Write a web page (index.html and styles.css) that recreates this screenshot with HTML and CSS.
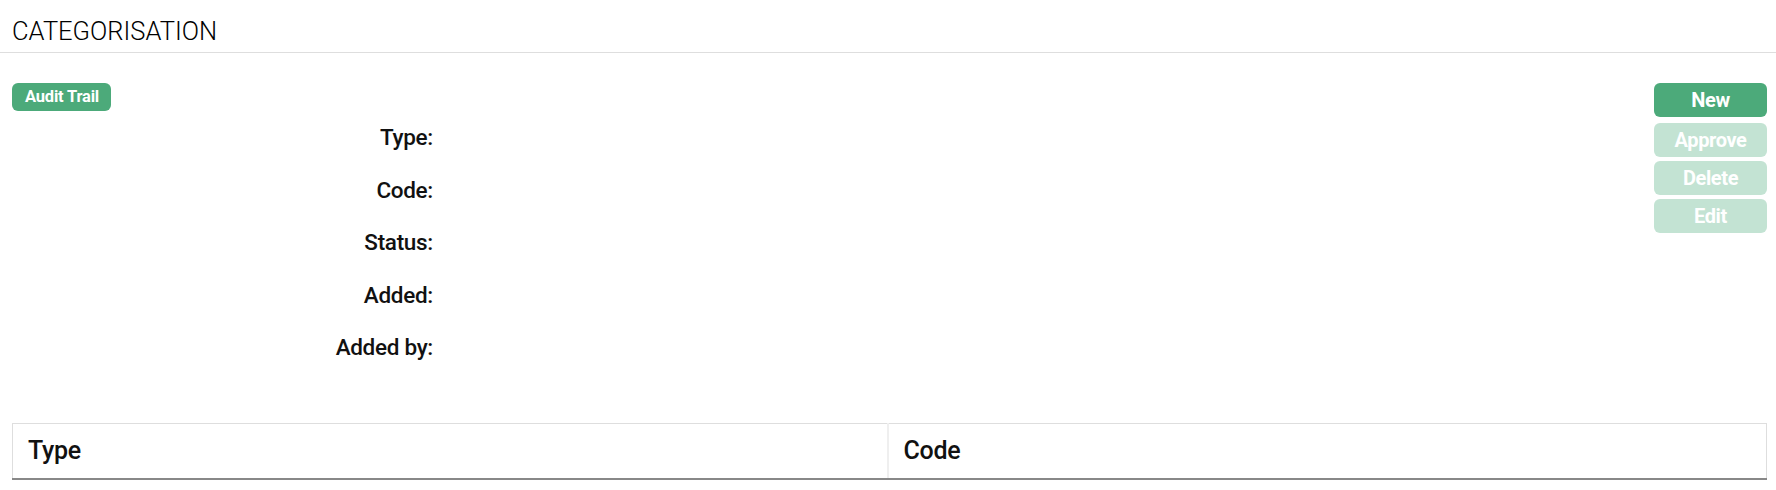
FILE: index.html
```html
<!DOCTYPE html>
<html>
<head>
<meta charset="utf-8">
<link rel="stylesheet" href="styles.css">
</head>
<body>
<header class="page-header">
  <h1 class="page-title">CATEGORISATION</h1>
</header>
<main class="content">
  <section class="detail">
    <div class="detail-main">
      <span class="badge">Audit Trail</span>
      <dl class="fields">
        <dt>Type:</dt><dd></dd>
        <dt>Code:</dt><dd></dd>
        <dt>Status:</dt><dd></dd>
        <dt>Added:</dt><dd></dd>
        <dt>Added by:</dt><dd></dd>
      </dl>
    </div>
    <div class="actions">
      <button class="btn btn-primary">New</button>
      <button class="btn btn-disabled">Approve</button>
      <button class="btn btn-disabled">Delete</button>
      <button class="btn btn-disabled">Edit</button>
    </div>
  </section>
  <table class="grid">
    <colgroup><col class="col-type"><col></colgroup>
    <thead>
      <tr><th>Type</th><th>Code</th></tr>
    </thead>
  </table>
</main>
</body>
</html>
```
FILE: styles.css
```css
* { box-sizing: border-box; }
html, body { margin: 0; padding: 0; background: #fff; }
body {
  font-family: Roboto, "Liberation Sans", sans-serif;
  color: #111;
}
.page-header {
  height: 53px;
  border-bottom: 1px solid #dedede;
  padding: 0 12px;
}
.page-title {
  margin: 0;
  font-weight: 300;
  font-size: 25.5px;
  line-height: 26px;
  padding-top: 18px;
  color: #000;
}
.content {
  padding: 30px 9px 0 12px;
}
.detail {
  display: flex;
  justify-content: space-between;
  align-items: flex-start;
}
.badge {
  display: inline-block;
  background: #4caa7a;
  color: #fff;
  font-weight: 700;
  font-size: 16.5px;
  line-height: 28px;
  height: 28px;
  padding: 0 12px 0 13px;
  border-radius: 6px;
  letter-spacing: -0.2px;
}
.fields {
  display: grid;
  grid-template-columns: 421px 1fr;
  margin: 0;
}
.fields dt {
  text-align: right;
  font-size: 22.5px;
  line-height: 52.5px;
  height: 52.5px;
  font-weight: 500;
  letter-spacing: -0.3px;
}
.fields dd { margin: 0; }
.actions {
  display: flex;
  flex-direction: column;
  gap: 4px;
  width: 113px;
}
.btn {
  height: 34px;
  border: none;
  border-radius: 6px;
  color: #fff;
  font-family: inherit;
  font-weight: 700;
  font-size: 20px;
  letter-spacing: -0.4px;
  padding: 0;
}
.btn-primary { background: #4caa7a; margin-bottom: 2px; }
.btn-disabled { background: #c3e3d3; }
.grid {
  margin-top: 49px;
  width: 100%;
  border-collapse: collapse;
  border: 1px solid #dedede;
  table-layout: fixed;
}
.col-type { width: 875px; }
.grid th {
  text-align: left;
  font-weight: 500;
  font-size: 25px;
  height: 56px;
  padding: 0 15px;
  border-bottom: 2px solid #888;
  letter-spacing: -0.3px;
}
.grid th + th { border-left: 2px solid #efefef; }
```
